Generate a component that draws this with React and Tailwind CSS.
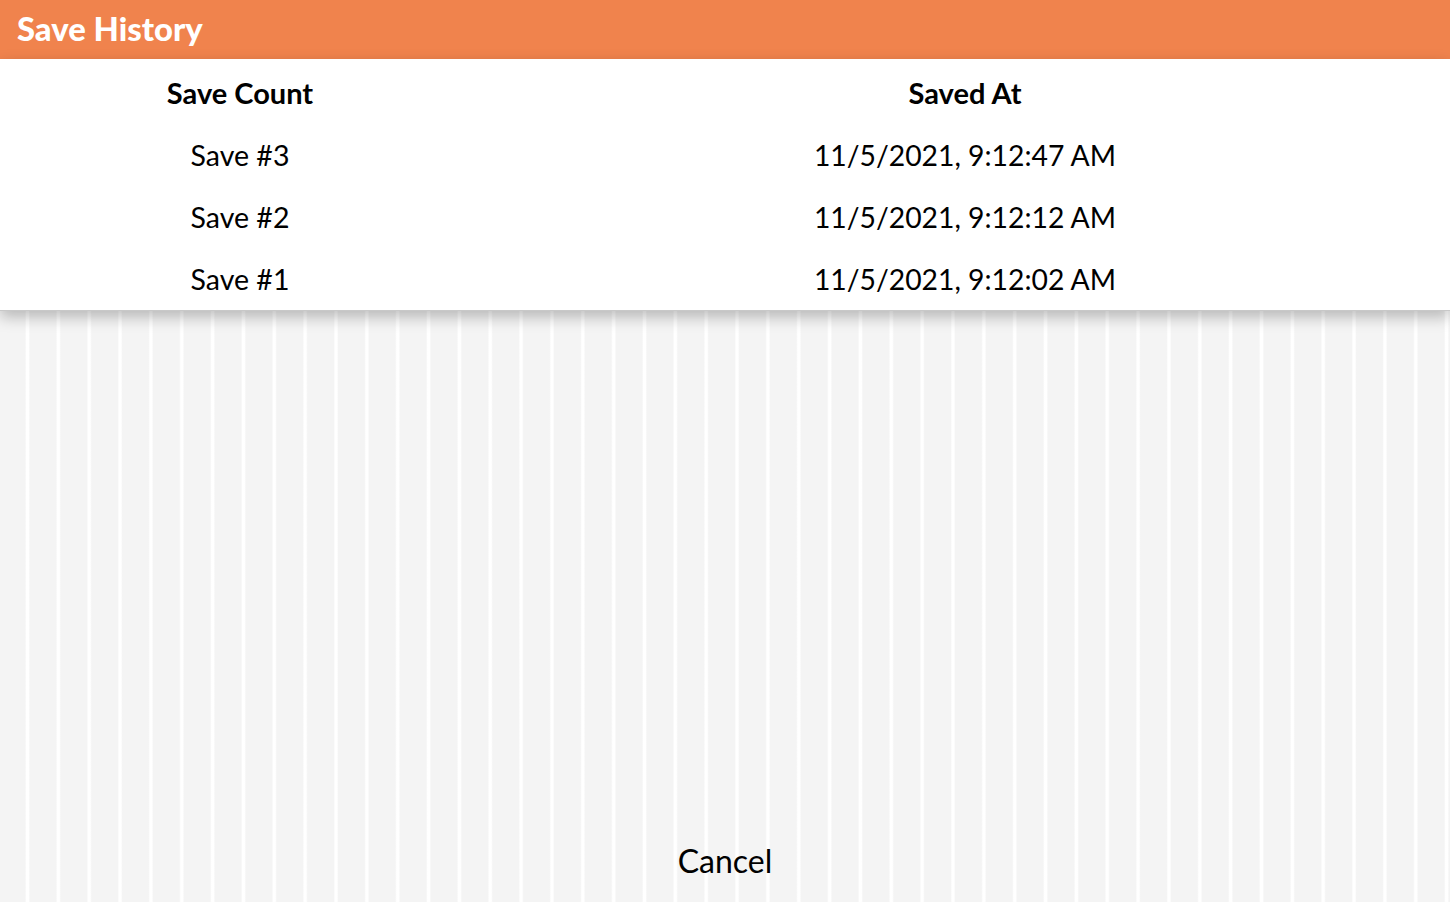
import React from 'react';

const saves = [
    { label: 'Save #3', at: '11/5/2021, 9:12:47 AM' },
    { label: 'Save #2', at: '11/5/2021, 9:12:12 AM' },
    { label: 'Save #1', at: '11/5/2021, 9:12:02 AM' },
];

const App = () => {
    return (
        <div className="h-[902px] flex flex-col font-['Lato',sans-serif] text-black bg-[repeating-linear-gradient(90deg,#f4f4f4_0px,#f4f4f4_25px,#ffffff_26.5px,#ffffff_28.5px,#f4f4f4_30px,#f4f4f4_30.85px)]">
            <div className="h-[59px] bg-[#f0834d] flex items-center px-[17px]">
                <h1 className="text-[32.8px] font-black text-white leading-none">Save History</h1>
            </div>

            <div className="relative z-10 bg-white pt-[3px] border-b border-[#c8c8c8] shadow-[0_6px_14px_rgba(0,0,0,0.25)]">
                <div className="grid grid-cols-[480px_1fr] h-[62px] items-center">
                    <div className="text-center text-[29px] font-bold">Save Count</div>
                    <div className="text-center text-[29px] font-bold">Saved At</div>
                </div>
                {saves.map((s) => (
                    <div key={s.label} className="grid grid-cols-[480px_1fr] h-[62px] items-center">
                        <div className="text-center text-[28.5px]">{s.label}</div>
                        <div className="text-center text-[28.3px]">{s.at}</div>
                    </div>
                ))}
            </div>

            <div className="flex-1 flex items-end justify-center pb-[25px]">
                <button className="text-[32px] leading-none text-black">Cancel</button>
            </div>
        </div>
    );
};

export default App;
